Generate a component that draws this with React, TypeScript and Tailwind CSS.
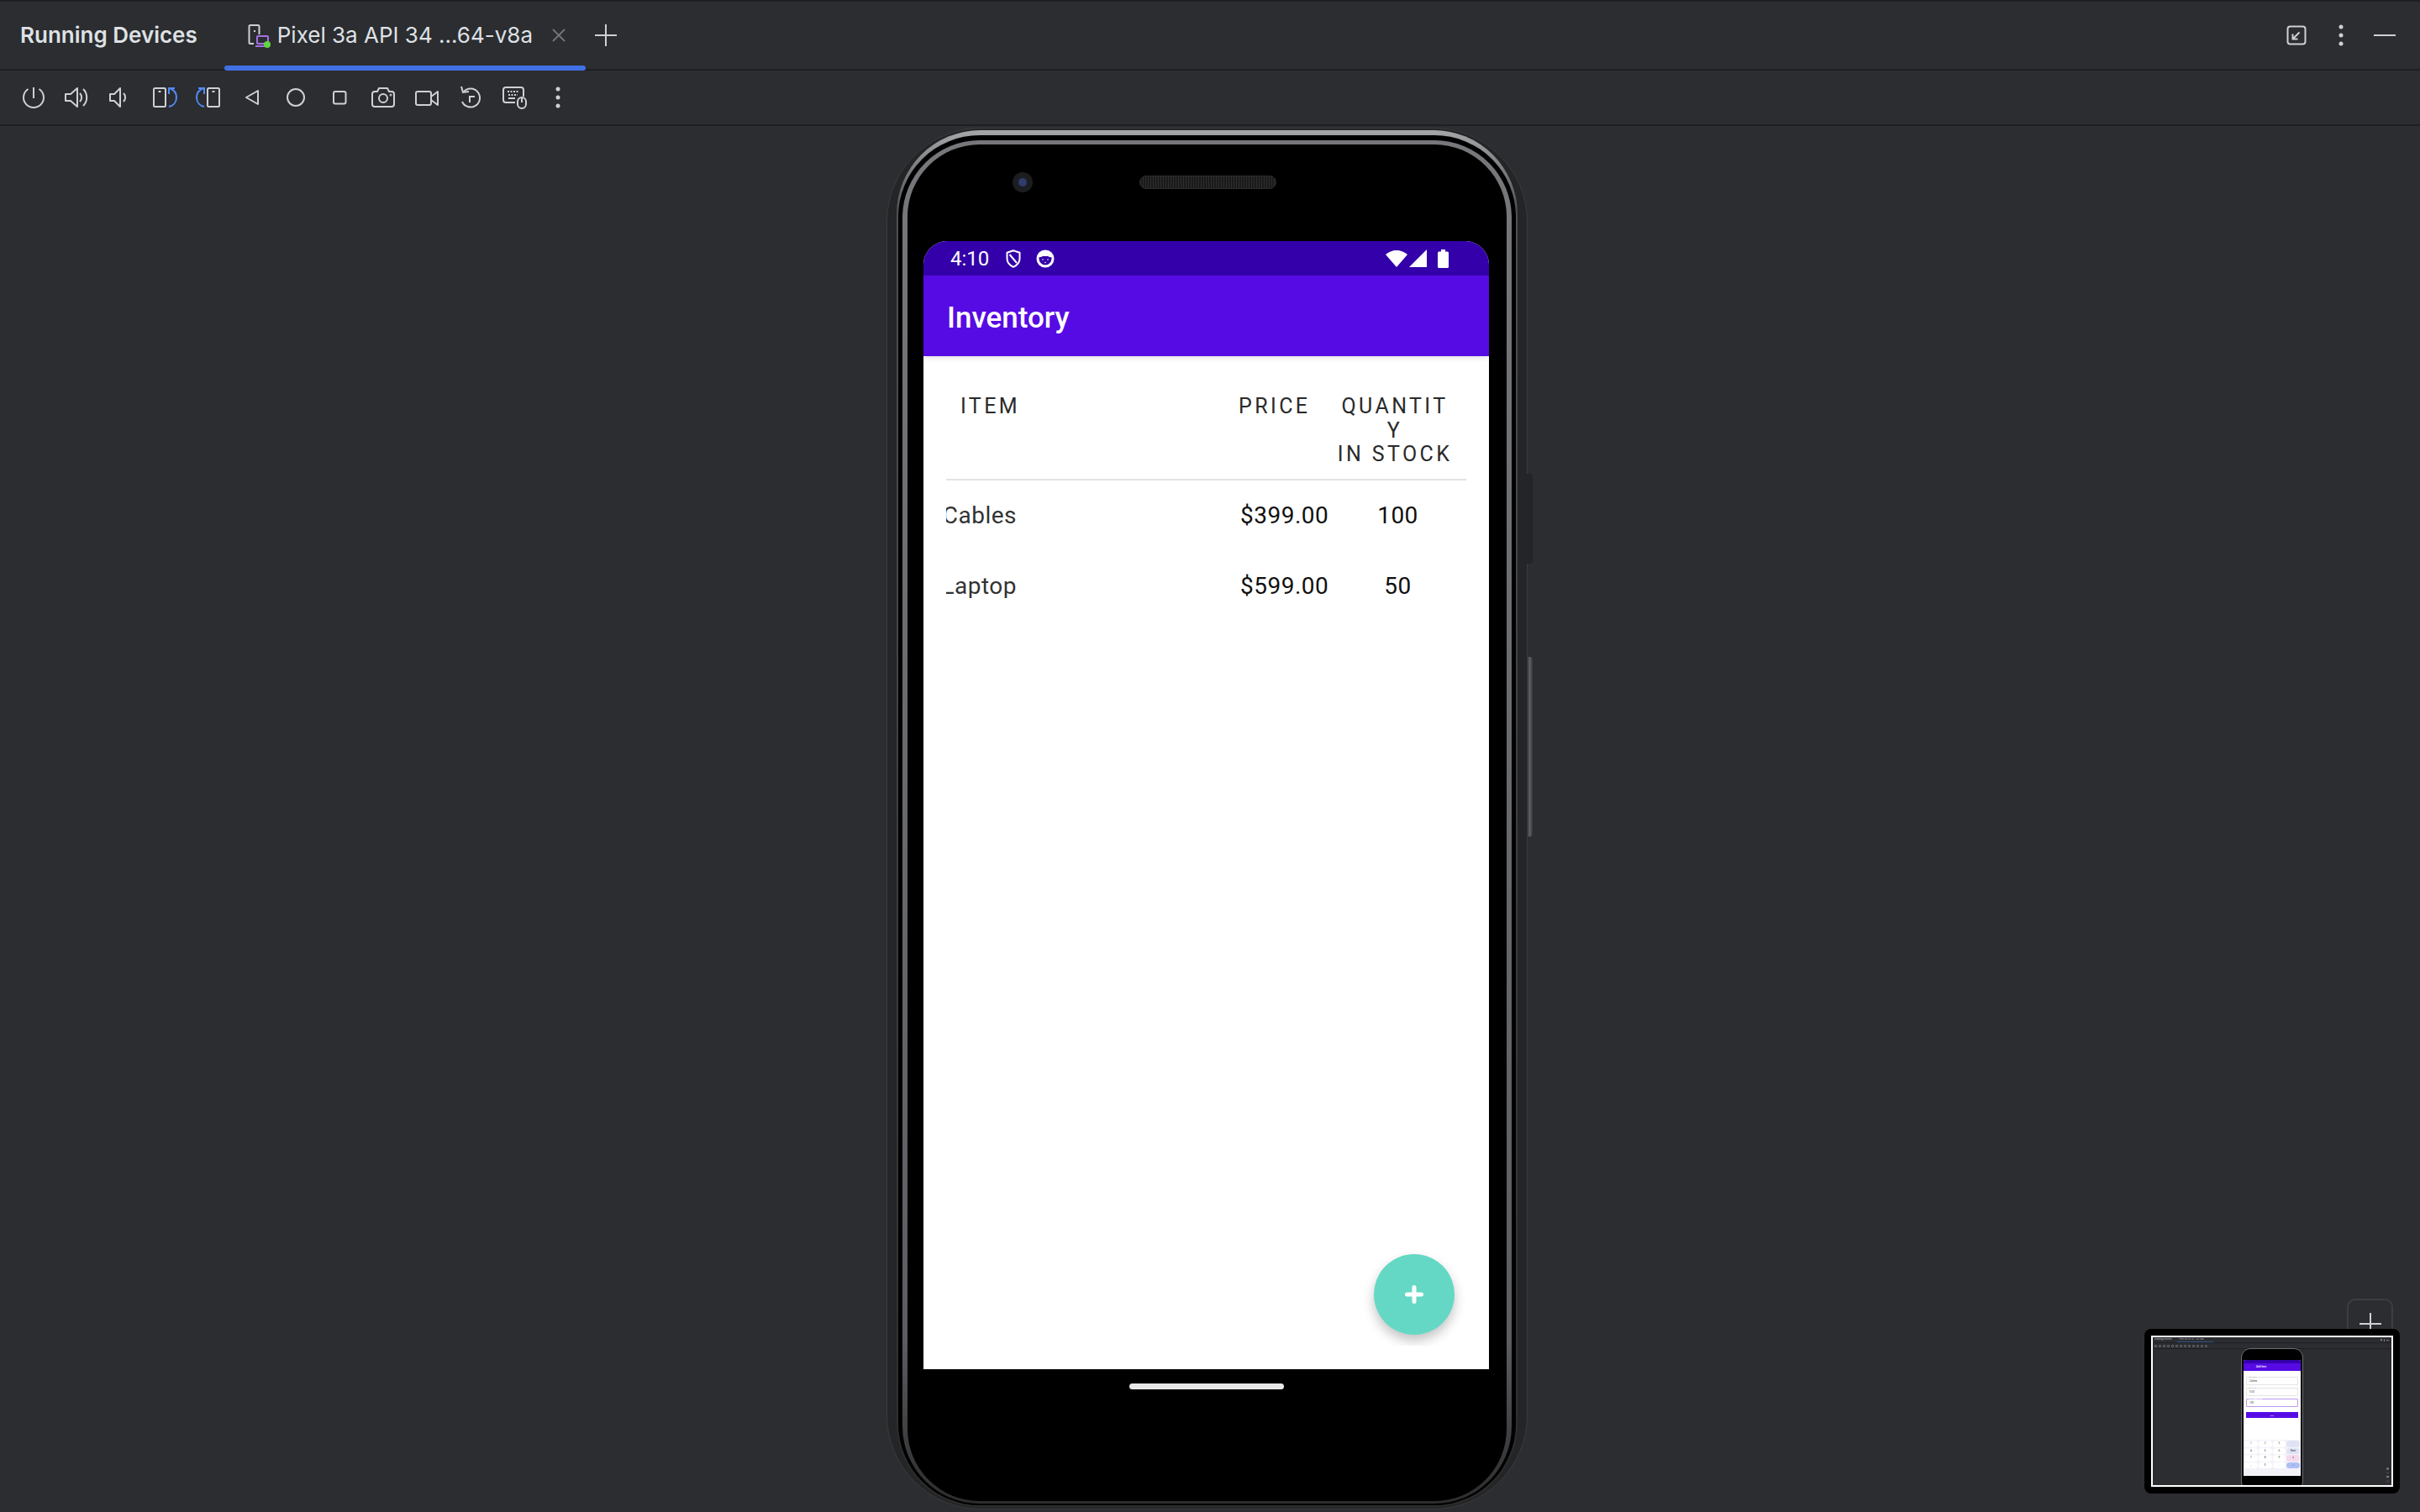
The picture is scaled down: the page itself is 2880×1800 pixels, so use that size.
const iconCls = 'w-8 h-8 fill-none stroke-[#ced0d6] stroke-2 shrink-0';

function PowerIcon() {
  return (
    <svg viewBox="0 0 32 32" className={iconCls}>
      <path d="M16 4v13" />
      <path d="M9.500 6 A12 12 0 1 0 22.500 6" />
    </svg>
  );
}

function VolumeUpIcon() {
  return (
    <svg viewBox="0 0 32 32" className={iconCls}>
      <path d="M2 12h6l8-7v22l-8-7H2z" strokeLinejoin="round" />
      <path d="M19 11a7 7 0 0 1 0 10" />
      <path d="M23 6a14 14 0 0 1 0 20" />
    </svg>
  );
}

function VolumeDownIcon() {
  return (
    <svg viewBox="0 0 32 32" className={iconCls}>
      <path d="M3 12h5l7-7v22l-7-7H3z" strokeLinejoin="round" />
      <path d="M19 11a7 7 0 0 1 0 10" />
    </svg>
  );
}

function RotateIcon({ flip }: { flip?: boolean }) {
  return (
    <svg viewBox="0 0 32 32" className={iconCls}>
      <g transform={flip ? 'matrix(-1 0 0 1 32 0)' : undefined}>
        <rect x="3" y="5" width="14" height="22" rx="1.500" />
        <path d="M8.500 9h3" />
        <path d="M21 27c5-1 9-5 9-11 0-5-3-9-8-11" className="stroke-[#548af7]" />
        <path d="M28 5h-7v7" className="stroke-[#548af7]" />
      </g>
    </svg>
  );
}

function BackIcon() {
  return (
    <svg viewBox="0 0 32 32" className={iconCls}>
      <path d="M23 8v16L9 16z" strokeLinejoin="round" />
    </svg>
  );
}

function HomeIcon() {
  return (
    <svg viewBox="0 0 32 32" className={iconCls}>
      <circle cx="16" cy="16" r="10" />
    </svg>
  );
}

function SquareIcon() {
  return (
    <svg viewBox="0 0 32 32" className={iconCls}>
      <rect x="9" y="9" width="14.500" height="14.500" rx="2" />
    </svg>
  );
}

function CameraIcon() {
  return (
    <svg viewBox="0 0 32 32" className={iconCls}>
      <path d="M3 12a3 3 0 0 1 3-3h3l2-4h10l2 4h3a3 3 0 0 1 3 3v12a3 3 0 0 1-3 3H6a3 3 0 0 1-3-3z" strokeLinejoin="round" />
      <circle cx="16" cy="17" r="5" />
      <circle cx="25" cy="13" r="0.500" />
    </svg>
  );
}

function VideoIcon() {
  return (
    <svg viewBox="0 0 32 32" className={iconCls}>
      <rect x="3" y="9" width="18" height="16" rx="2" />
      <path d="M21 15l8-6v16l-8-6" strokeLinejoin="round" />
    </svg>
  );
}

function ReplayIcon() {
  return (
    <svg viewBox="0 0 32 32" className={iconCls}>
      <path d="M8 9a11 11 0 1 1-2 12" />
      <path d="M5 3l2 7 7-1" />
      <path d="M15 22v-7h6" />
    </svg>
  );
}

function KeyboardMouseIcon() {
  return (
    <svg viewBox="0 0 32 32" className={iconCls}>
      <path d="M17 22H6a3 3 0 0 1-3-3V7a3 3 0 0 1 3-3h18a3 3 0 0 1 3 3v8" />
      <path d="M8 9h14M9 13h11" strokeDasharray="2 1.500" />
      <path d="M9 17h8" />
      <rect x="20" y="16" width="10" height="13" rx="5" />
      <path d="M25 17v5" />
    </svg>
  );
}

function MoreIcon() {
  return (
    <svg viewBox="0 0 32 32" className="w-8 h-8 fill-[#ced0d6] shrink-0">
      <circle cx="16" cy="6" r="2.500" />
      <circle cx="16" cy="16" r="2.500" />
      <circle cx="16" cy="26" r="2.500" />
    </svg>
  );
}

function DeviceTabIcon() {
  return (
    <svg viewBox="0 0 32 32" className="w-8 h-8 fill-none shrink-0">
      <path d="M10 26H6a1.500 1.500 0 0 1-1.500-1.500v-19A1.500 1.500 0 0 1 6 4h9a1.500 1.500 0 0 1 1.500 1.500V15" stroke="#ced0d6" strokeWidth="2" />
      <path d="M10 11h2" stroke="#ced0d6" strokeWidth="2" />
      <rect x="14" y="17" width="13" height="9" rx="1" stroke="#a571e6" strokeWidth="2" />
      <path d="M12 29h14" stroke="#a571e6" strokeWidth="2" />
      <circle cx="26" cy="27" r="4" fill="#5fd83f" />
    </svg>
  );
}

function ToolWindowBar() {
  return (
    <header className="flex items-center h-[82px] border-b-2 border-[#1e1f22] shrink-0 font-['Inter',sans-serif] text-[#dfe1e5]">
      <span className="pl-6 text-[26px] font-semibold leading-none">Running Devices</span>
      <div className="relative flex items-center h-full w-[430px] ml-[32px] pl-[25px]">
        <DeviceTabIcon />
        <span className="ml-[6px] text-[26px] leading-none whitespace-nowrap">Pixel 3a API 34 ...64-v8a</span>
        <svg viewBox="0 0 20 20" className="w-5 h-5 ml-[21px] stroke-[#6f737a] stroke-2">
          <path d="M3 3l14 14M17 3L3 17" />
        </svg>
        <div className="absolute left-0 right-0 -bottom-[2px] h-[6px] rounded-full bg-[#4270e5]" />
      </div>
      <svg viewBox="0 0 28 28" className="w-7 h-7 ml-[10px] stroke-[#ced0d6] stroke-2">
        <path d="M14 1v26M1 14h26" />
      </svg>
      <div className="flex items-center ml-auto pr-[29px]">
        <svg viewBox="0 0 24 24" className="w-6 h-6 fill-none stroke-[#ced0d6] stroke-2">
          <rect x="1.500" y="1.500" width="21" height="21" rx="3" />
          <path d="M15.500 8.500L7.500 16.500M7.500 10.500v6h6" />
        </svg>
        <svg viewBox="0 0 10 30" className="w-[10px] h-[30px] ml-[36px] fill-[#ced0d6]">
          <circle cx="5" cy="5" r="2.500" />
          <circle cx="5" cy="15" r="2.500" />
          <circle cx="5" cy="25" r="2.500" />
        </svg>
        <div className="w-[26px] h-[2px] ml-[34px] bg-[#ced0d6]" />
      </div>
    </header>
  );
}

function DeviceToolbar() {
  return (
    <div className="flex items-center gap-5 h-[66px] pl-6 border-b-2 border-[#1e1f22] shrink-0">
      <PowerIcon />
      <VolumeUpIcon />
      <VolumeDownIcon />
      <RotateIcon />
      <RotateIcon flip />
      <BackIcon />
      <HomeIcon />
      <SquareIcon />
      <CameraIcon />
      <VideoIcon />
      <ReplayIcon />
      <KeyboardMouseIcon />
      <MoreIcon />
    </div>
  );
}

function StatusBar() {
  return (
    <div className="flex items-center h-[41px] pl-8 pr-[48px] bg-[#3300aa] text-white shrink-0">
      <span className="text-[24px] leading-none font-['Roboto',sans-serif]">4:10</span>
      <svg viewBox="0 0 18 22" className="w-[18px] h-[22px] ml-[20px] fill-none stroke-white stroke-2">
        <path d="M9 1.200L1.500 3.800v7c0 4.500 3 8 7.500 10 4.500-2 7.500-5.500 7.500-10v-7z" />
        <path d="M4.500 6l8.500 10" />
      </svg>
      <svg viewBox="0 0 22 22" className="w-[22px] h-[22px] ml-[18px]">
        <circle cx="11" cy="11" r="10.500" fill="#fff" />
        <path d="M3.500 9c2 1 3.500-1 4.500-1h6c1 0 2.500 2 4.500 1v2a7.500 7.500 0 0 1-15 0z" fill="#3300aa" />
        <circle cx="8" cy="12" r="0.800" fill="#fff" />
        <circle cx="14" cy="12" r="0.800" fill="#fff" />
        <circle cx="11" cy="15.500" r="0.800" fill="#fff" />
      </svg>
      <svg viewBox="0 0 26 20" className="w-[26px] h-5 ml-auto fill-white">
        <path d="M13 20L0 5c3.500-3 8-5 13-5s9.500 2 13 5z" />
      </svg>
      <svg viewBox="0 0 21 21" className="w-[21px] h-[21px] ml-[2px] fill-white">
        <path d="M21 0v21H0z" />
      </svg>
      <svg viewBox="0 0 13 22" className="w-[13px] h-[22px] ml-[13px] fill-white">
        <path d="M4 0h5v2.500h2.500A1.500 1.500 0 0 1 13 4v16.500a1.500 1.500 0 0 1-1.500 1.500h-10A1.500 1.500 0 0 1 0 20.500V4a1.500 1.500 0 0 1 1.500-1.500H4z" />
      </svg>
    </div>
  );
}

const rows = [
  { name: 'Cables', price: '$399.00', qty: '100' },
  { name: 'Laptop', price: '$599.00', qty: '50' },
];

function InventoryTable() {
  return (
    <div className="mx-[27px] font-['Roboto',sans-serif] text-[#111111]">
      <div className="flex items-start pt-[46px] pb-[14px] border-b-2 border-[#e2e2e2] text-[25px] font-normal text-[#2a2a2a] leading-[28.5px] tracking-[3.4px]">
        <div className="w-[88px] text-right">ITEM</div>
        <div className="ml-[260px] w-[117px]">PRICE</div>
        <div className="w-[138px] text-center">
          <div>QUANTIT</div>
          <div>Y</div>
          <div className="whitespace-nowrap">IN STOCK</div>
        </div>
      </div>
      {rows.map((row) => (
        <div key={row.name} className="flex items-center h-[84px] text-[28px] leading-none tracking-[0.5px]">
          <div className="flex justify-end w-[84px] overflow-hidden whitespace-nowrap text-[#333333]">
            <span className="shrink-0">{row.name}</span>
          </div>
          <div className="ml-[266px] w-[117px] font-[450] whitespace-nowrap">{row.price}</div>
          <div className="w-[136px] pl-[5px] text-center font-[450]">{row.qty}</div>
        </div>
      ))}
    </div>
  );
}

function PhoneScreen() {
  return (
    <div className="relative flex flex-col w-[673px] h-[1343px] rounded-t-[28px] overflow-hidden bg-white">
      <StatusBar />
      <div className="flex items-center h-[96px] pl-[28px] pt-[4px] bg-[#570be4] shadow-[0_2px_6px_rgba(0,0,0,0.12)] shrink-0">
        <span className="text-[35px] leading-none font-medium text-white font-['Roboto',sans-serif]">Inventory</span>
      </div>
      <InventoryTable />
      <div className="absolute right-[21px] bottom-[28px] p-5 pb-[13px] overflow-hidden">
        <button className="flex items-center justify-center w-24 h-24 rounded-full bg-[#64d8c5] shadow-[0_7px_14px_rgba(0,0,0,0.24)]">
          <svg viewBox="0 0 22 22" className="w-[22px] h-[22px] stroke-white stroke-[5px]" strokeLinecap="round">
            <path d="M11 2.500v17M2.500 11h17" />
          </svg>
        </button>
      </div>
    </div>
  );
}

function Phone() {
  return (
    <div className="relative w-[763px] h-[1645px] shrink-0">
      {/* side buttons */}
      <div className="absolute left-[762px] top-[412px] w-[7px] h-[107px] rounded-r-sm bg-[#232427]" />
      <div className="absolute left-[762px] top-[630px] w-[7px] h-[214px] rounded-r-sm bg-gradient-to-r from-[#2c2d2f] via-[#5f6064] to-[#35363a]" />
      {/* frame rings */}
      <div className="h-full rounded-[112px] py-[2px] px-[11px] bg-[#242526] border border-[#3a3b3e]">
        <div className="h-full rounded-[100px] pt-[6px] pb-[2px] px-[2px] bg-gradient-to-b from-[#a6a7a9] via-[#4f5053] via-[6%] to-[#2d2d2e]">
          <div className="h-full rounded-[97px] pt-[6px] pb-[2px] px-[5px] bg-black">
            <div className="h-full rounded-[92px] pt-[5px] pb-[3px] px-[6px] bg-gradient-to-b from-[#77787b] via-[#5c5d61] via-[88%] to-[#2c2c2d]">
              <div className="flex flex-col h-full rounded-[86px] pl-[19px] pr-[21px] bg-black">
                <div className="flex items-center h-[115px] pt-[33px] pb-[58px] pl-[106px] shrink-0">
                  <div className="flex items-center justify-center w-6 h-6 rounded-full bg-[#1c1d20]">
                    <div className="w-[10px] h-[10px] rounded-full bg-[#2f3c6e]" />
                  </div>
                  <div className="w-[163px] h-4 ml-[127px] rounded-full border border-[#2c2c2c] bg-[repeating-linear-gradient(90deg,#2e2e2e_0_1px,#1a1a1a_1px_3px)]" />
                </div>
                <PhoneScreen />
                <div className="flex justify-center pt-[17px]">
                  <div className="w-[184px] h-[7px] rounded-full bg-[#e8e8e8]" />
                </div>
              </div>
            </div>
          </div>
        </div>
      </div>
    </div>
  );
}

const miniKeys = [
  { label: '1' }, { label: '2' }, { label: '3' }, { label: '-', tone: 'bg-[#dfe3f5]' },
  { label: '4' }, { label: '5' }, { label: '6' }, { label: 'Next', tone: 'bg-[#dfe3f5]' },
  { label: '7' }, { label: '8' }, { label: '9' }, { label: '×', tone: 'bg-[#f6d9ee]' },
  { label: ',' }, { label: '0' }, { label: '.' }, { label: '✓', tone: 'bg-[#aebff5]' },
];

function MiniField({ label, value, focused }: { label: string; value: string; focused?: boolean }) {
  return (
    <div className={`relative h-[10px] rounded-[1px] border pl-[3px] flex items-center text-[3px] leading-none ${focused ? 'border-[#bb9af0]' : 'border-[#e4e4e4]'} text-[#444444]`}>
      <span className={`absolute -top-[2px] left-[2px] bg-white text-[2px] leading-none whitespace-nowrap ${focused ? 'text-[#8a5ce6]' : 'text-[#888888]'}`}>{label}</span>
      {value}
    </div>
  );
}

function Minimap() {
  return (
    <>
      <div className="absolute left-[2793px] top-[1544px] flex justify-center pt-[15px] w-[55px] h-[60px] rounded-[10px] border-2 border-[#3c3f41]">
        <svg viewBox="0 0 26 26" className="w-[26px] h-[26px] stroke-[#ced0d6] stroke-2">
          <path d="M13 0v26M0 13h26" />
        </svg>
      </div>
      <div className="absolute left-[2552px] top-[1580px] w-[304px] h-[196px] p-2 rounded-lg bg-black">
        <div className="relative w-full h-full overflow-hidden border-2 border-white bg-[#2b2d30] font-['Inter',sans-serif] text-[#a9abb0]">
          <div className="flex items-center h-[7px] pl-[2px] text-[2.500px] leading-none border-b border-[#1e1f22]">
            <span className="font-semibold">Running Devices</span>
            <div className="relative flex items-center h-full w-[43px] ml-[7px] pl-[2px]">
              <span className="whitespace-nowrap">Pixel 3a API 34 ...64-v8a</span>
              <div className="absolute left-0 right-0 bottom-0 h-[1px] bg-[#36558f]" />
            </div>
            <div className="flex items-center gap-[2px] ml-auto mr-[3px]">
              <div className="w-[2px] h-[2px] bg-[#7d7f84]" />
              <div className="w-[1px] h-[3px] bg-[#7d7f84]" />
              <div className="w-[3px] h-[1px] bg-[#7d7f84]" />
            </div>
          </div>
          <div className="flex items-center gap-[2px] h-[7px] pl-[2px] border-b border-[#1e1f22]">
            {Array.from({ length: 13 }, (_, i) => (
              <div key={i} className="w-[3px] h-[3px] rounded-[1px] border-[0.5px] border-[#65676b]" />
            ))}
          </div>
          {/* tiny copy of the phone */}
          <div className="flex flex-col absolute left-[105px] top-[13px] w-[74px] h-[170px] rounded-[11px] border border-[#6b6c70] bg-black px-[2px] pt-[13px]">
            <div className="flex flex-col h-[138px] bg-white overflow-hidden rounded-t-[2px] font-['Roboto',sans-serif]">
              <div className="h-[4px] bg-[#3300aa] shrink-0" />
              <div className="flex items-center h-[9px] pl-[4px] bg-[#570be4] text-white text-[3px] leading-none font-medium shrink-0">
                <span>←</span>
                <span className="ml-[8px]">Add item</span>
              </div>
              <div className="flex flex-col gap-[3px] px-[3px] pt-[7px]">
                <MiniField label="Item Name *" value="Cables" />
                <MiniField label="Item Price *" value="0.00" />
                <MiniField label="Quantity in Stock *" value="100" focused />
                <div className="flex items-center justify-center h-[7px] mt-[3px] bg-[#570be4] text-white text-[2px] leading-none">Save</div>
              </div>
              <div className="mt-auto h-[43px] grid grid-cols-4 content-start gap-x-[1px] gap-y-[1px] px-[1px] pt-[1px] bg-[#f3f2f8]">
                {miniKeys.map((key) => (
                  <div key={key.label} className={`flex items-center justify-center h-[7.500px] rounded-full text-[3px] leading-none text-[#333333] ${key.tone ?? 'bg-white'}`}>
                    {key.label}
                  </div>
                ))}
              </div>
            </div>
          </div>
          {/* tiny zoom controls */}
          <div className="absolute right-[3px] bottom-[3px] flex flex-col items-center gap-[3px]">
            <div className="w-[3px] h-[3px] rounded-[1px] bg-[#6d6f73]" />
            <div className="w-[3px] h-[1px] bg-[#4e5054]" />
            <div className="w-[3px] h-[2px] bg-[#7d7f84]" />
            <div className="w-[3px] h-[3px] rounded-full border-[0.5px] border-[#4e5054]" />
          </div>
        </div>
      </div>
    </>
  );
}

export default function App() {
  return (
    <div className="relative flex flex-col w-[2880px] h-[1800px] overflow-hidden bg-[#2b2d30] border-t-2 border-[#1e1f22]">
      <ToolWindowBar />
      <DeviceToolbar />
      <main className="flex justify-center flex-1 pt-[2px] pr-[7px]">
        <Phone />
      </main>
      <Minimap />
    </div>
  );
}
